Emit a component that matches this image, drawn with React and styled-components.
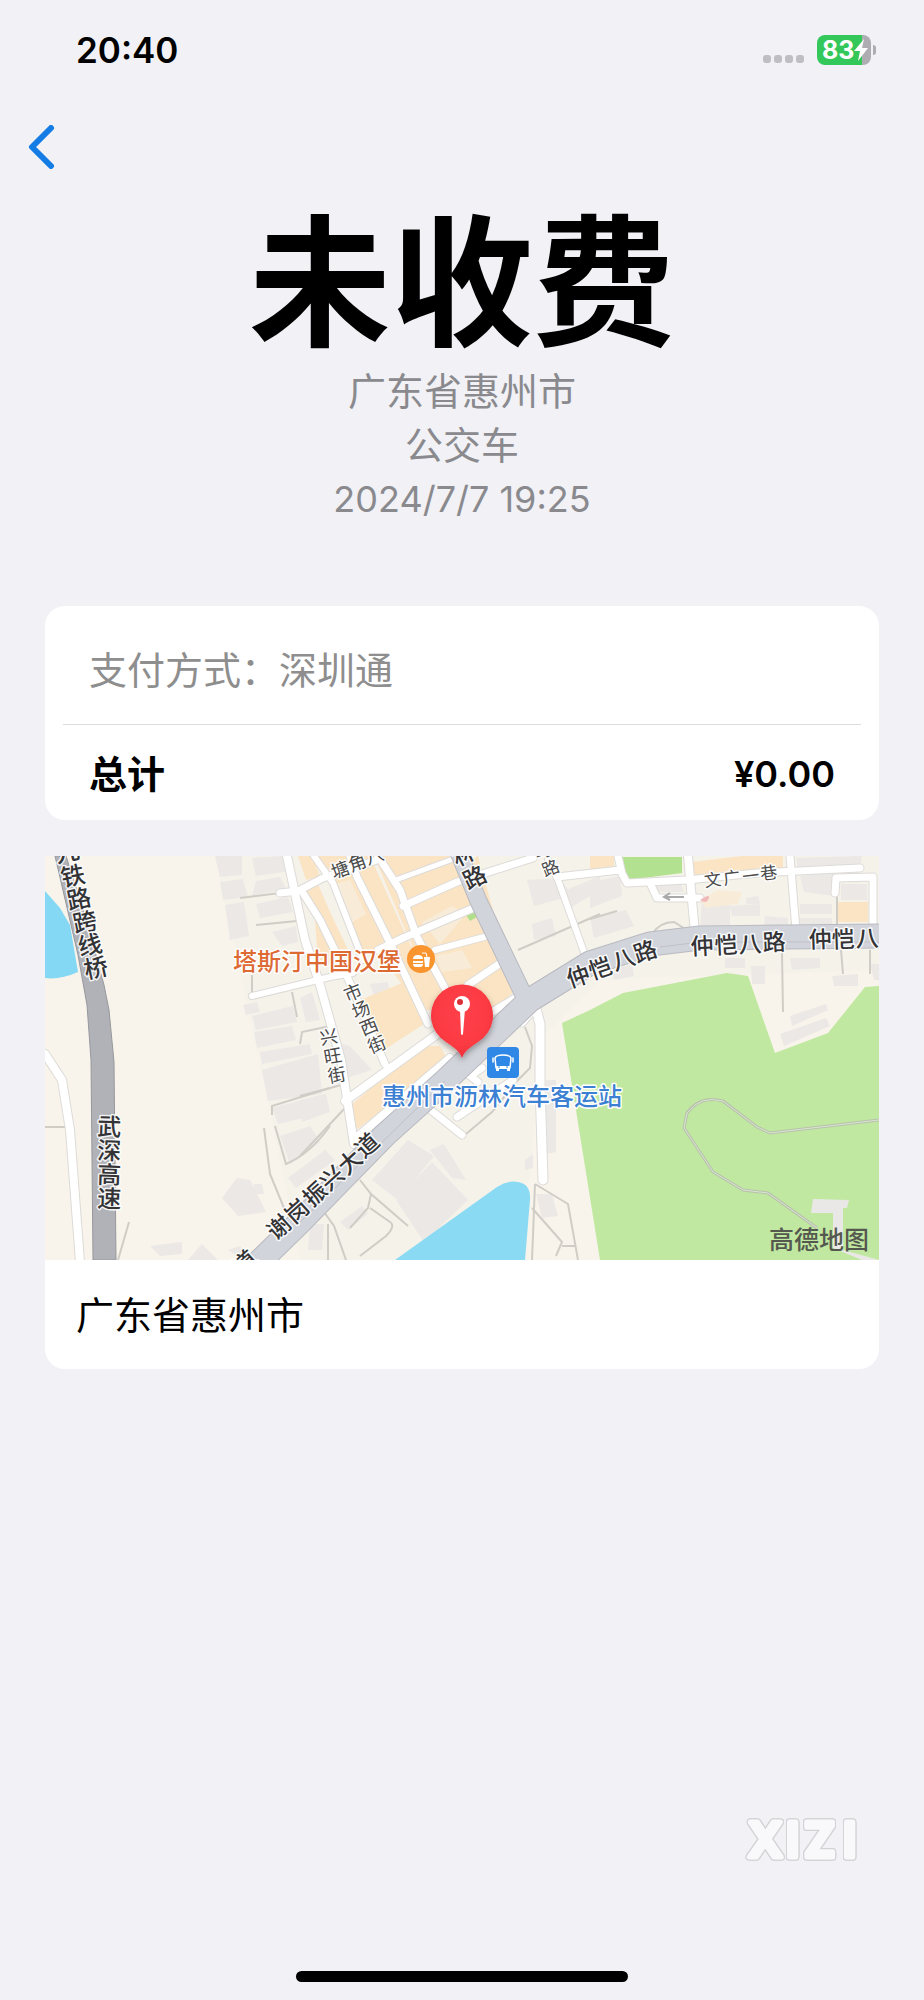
import React from "react";
import styled, { createGlobalStyle } from "styled-components";

const GlobalStyle = createGlobalStyle`
  * { box-sizing: border-box; }
  body {
    margin: 0;
    background: #f1f1f6;
    color: #000;
    font-family: Inter, "Noto Sans CJK SC", sans-serif;
  }
`;

const Screen = styled.div`
  min-height: 100vh;
  display: flex;
  flex-direction: column;
`;

const StatusBar = styled.header`
  height: 100px;
  padding: 0 48px 0 76px;
  display: flex;
  align-items: center;
  justify-content: space-between;
`;

const Clock = styled.time`
  font-size: 35px;
  line-height: 44px;
  font-weight: 600;
`;

const StatusIcons = styled.div`
  display: flex;
  align-items: center;
  gap: 13px;
`;

const SignalDots = styled.div`
  display: flex;
  gap: 3px;
  padding-top: 18px;
`;

const Dot = styled.span`
  width: 8px;
  height: 8px;
  border-radius: 3px;
  background: #bebec3;
`;

const Battery = styled.div`
  display: flex;
  align-items: center;
  gap: 2px;
`;

const BatteryBody = styled.div`
  width: 54px;
  height: 30px;
  padding-left: 5px;
  border-radius: 8px;
  display: flex;
  align-items: center;
  background: linear-gradient(to right, #34c759 83%, #adadb2 83%);
  color: #fff;
  font-size: 25px;
  line-height: 30px;
  font-weight: 700;
`;

const BatteryTip = styled.span`
  width: 3px;
  height: 10px;
  border-radius: 0 3px 3px 0;
  background: #adadb2;
`;

const NavBar = styled.nav`
  height: 94px;
  padding: 0 20px;
  display: flex;
  align-items: center;
`;

const BackButton = styled.button`
  width: 44px;
  height: 56px;
  padding: 0;
  border: 0;
  background: none;
  display: flex;
  align-items: center;
  justify-content: center;
  cursor: pointer;
`;

const Summary = styled.section`
  padding-top: 8px;
  text-align: center;
`;

const Title = styled.h1`
  margin: 0;
  font-size: 142px;
  line-height: 162px;
  font-weight: 600;
`;

const Detail = styled.p`
  margin: 0;
  font-size: ${(p) => (p.$numeric ? "36px" : "38px")};
  line-height: 54px;
  color: #8a8a8e;
`;

const Cards = styled.main`
  padding: 80px 45px 0;
  display: flex;
  flex-direction: column;
  gap: 36px;
`;

const Card = styled.section`
  border-radius: ${(p) => (p.$flatTop ? "0 0 20px 20px" : "20px")};
  overflow: hidden;
  background: #fff;
`;

const Row = styled.div`
  display: flex;
  justify-content: space-between;
  padding: ${(p) => (p.$total ? "23px 44px 20px" : "38px 44px 28px")};
  font-size: 38px;
  line-height: 52px;
  font-weight: ${(p) => (p.$total ? 600 : 400)};
  color: ${(p) => (p.$total ? "#000" : "#8e8e8e")};
`;

const Amount = styled.span`
  font-size: 36px;
`;

const Divider = styled.hr`
  height: 1px;
  margin: 0 18px;
  border: 0;
  background: #dcdcde;
`;

const MapSvg = styled.svg`
  display: block;
  width: 100%;
  height: auto;
  font-family: "Noto Sans CJK SC", sans-serif;
`;

const Address = styled.p`
  margin: 0;
  padding: 29px 31px 28px;
  font-size: 38px;
  line-height: 52px;
`;

const Footer = styled.footer`
  margin-top: auto;
  padding-bottom: 18px;
  display: flex;
  flex-direction: column;
  align-items: center;
  gap: 106px;
`;

const Watermark = styled.svg`
  align-self: flex-end;
  margin-right: 60px;
  overflow: visible;
  font-family: Inter, sans-serif;
  filter: drop-shadow(1px 0 0 #d3d3d7) drop-shadow(-1px 0 0 #d3d3d7)
    drop-shadow(0 1px 0 #d3d3d7) drop-shadow(0 -1px 0 #d3d3d7);
`;

const HomeIndicator = styled.div`
  width: 36%;
  height: 11px;
  border-radius: 6px;
  background: #000;
`;

const buildings = [
  "215,856 242,856 242,875 220,877", "252,858 282,856 285,872 256,876",
  "220,882 243,879 248,897 223,900", "256,881 280,877 286,889 252,896",
  "225,905 244,902 249,936 230,940", "256,904 288,897 293,912 260,918",
  "272,932 296,926 298,942 282,946", "243,1005 257,1002 260,1012 246,1015",
  "252,1016 293,1006 297,1022 256,1030", "254,1032 292,1026 296,1040 257,1048",
  "260,1052 310,1044 312,1054 262,1064", "262,1070 318,1054 322,1094 268,1101",
  "300,998 312,992 320,1020 306,1022", "272,1108 325,1094 328,1112 278,1124",
  "280,1136 310,1126 320,1142 290,1164", "288,1178 325,1150 335,1160 296,1188",
  "222,1198 237,1178 250,1180 266,1212 238,1216", "254,1184 262,1184 264,1194 254,1194",
  "150,1246 182,1242 182,1254 160,1256", "188,1260 202,1244 218,1260",
  "310,1224 324,1224 322,1250 308,1250", "228,1250 240,1246 250,1256 242,1260",
  "372,1180 408,1140 434,1156 398,1200", "396,1200 432,1162 468,1200 424,1242",
  "430,1150 444,1144 466,1180 452,1178", "340,1222 362,1206 368,1214 348,1230",
  "525,1160 533,1154 533,1168 525,1170", "300,1100 326,1094 330,1112 302,1122",
  "330,1040 350,1046 372,1070 340,1080", "370,984 388,982 392,1010 376,1002",
  "546,1080 556,1080 556,1152 546,1154", "536,1194 552,1194 558,1216 542,1218",
  "527,880 560,878 572,896 534,906", "532,924 552,918 556,936 534,940",
  "566,890 600,876 600,890 570,908", "590,882 620,876 622,896 590,908",
  "590,918 626,910 634,926 594,938", "656,884 680,882 684,892 658,892",
  "702,898 730,892 730,928 700,932", "730,906 760,904 760,916 732,916",
  "746,898 758,896 760,904 746,904", "765,916 788,918 788,926 764,926",
  "796,858 862,856 860,866 798,868", "800,876 834,872 834,896 804,892",
  "800,904 832,904 832,914 800,914", "798,918 832,918 832,926 798,926",
  "841,884 867,884 867,900 841,900", "725,958 745,958 745,968 725,968",
  "751,966 765,966 765,984 752,984", "790,958 820,958 820,968 792,970",
  "832,976 858,974 858,986 834,986", "870,964 879,964 879,980 874,980",
  "790,1016 826,1004 828,1010 792,1026", "780,1034 826,1018 830,1026 784,1046",
  "590,968 602,966 604,974 590,976", "612,970 632,964 634,976 614,980",
];

const blocks = [
  "298,856 312,856 320,876 306,880", "303,892 318,884 330,912 352,958 340,966 314,916",
  "315,920 334,948 344,968 318,962", "312,856 370,856 440,1010 420,1010 326,878",
  "332,886 355,878 387,946 362,954", "374,856 478,856 515,990 486,1020 440,1012",
  "360,1000 410,980 424,1024 384,1050 366,1018", "350,1106 420,1046 440,1046 448,1060 356,1130",
  "590,856 614,856 614,866 590,870", "692,862 742,856 783,856 783,870 695,880",
  "838,902 868,902 868,922 838,922",
];

const pale = [
  "422,922 452,906 466,914 440,944", "436,956 462,950 472,968 442,972",
  "335,884 350,880 366,914 352,922", "700,900 718,890 742,892 738,904 706,908",
];

const streets = [
  { d: "M287 856L305 940L320 985L341 1060L354 1144", w: 8 },
  { d: "M303 893L320 920L343 967L385 1064", w: 7 },
  { d: "M314 856L333 883L363 960", w: 6 },
  { d: "M350 856L357 877L390 943L428 1024", w: 7 },
  { d: "M378 856L400 890L417 937L446 990", w: 7 },
  { d: "M280 893L298 891L323 878L377 860", w: 7 },
  { d: "M378 950L403 938L476 907", w: 7 },
  { d: "M403 906L457 882L533 858", w: 7 },
  { d: "M393 881L456 858", w: 5 },
  { d: "M435 950L488 936", w: 6 },
  { d: "M468 985L502 962", w: 7 },
  { d: "M492 1012L520 995", w: 7 },
  { d: "M345 1101L443 1030", w: 8 },
  { d: "M356 1138L450 1058", w: 8 },
  { d: "M252 996L330 977L353 973", w: 6 },
  { d: "M535 1005L540 1024L540 1083L543 1180", w: 9 },
  { d: "M522 1023L535 1008", w: 7 },
  { d: "M427 1107L462 1135", w: 7 },
  { d: "M457 1117L513 1080", w: 7 },
  { d: "M463 1070L478 1082M470 1076L482 1068", w: 7 },
  { d: "M548 860L557 877L585 955", w: 6 },
  { d: "M557 877L620 870L627 883L687 880L757 873L860 868", w: 7 },
  { d: "M618 856L622 874", w: 7 },
  { d: "M650 883L657 898L700 898", w: 7 },
  { d: "M688 856L695 933", w: 8 },
  { d: "M790 856L796 930", w: 7 },
  { d: "M835 893L836 878L873 877L873 924", w: 7 },
  { d: "M45 1054L62 1080L70 1130L80 1262", w: 8 },
];

const lanes = [
  "M45 1127H65", "M118 1260L129 1222", "M240 898L280 893", "M256 925L297 921",
  "M252 975V996", "M292 992L297 1017", "M300 1044L302 1032L330 1026",
  "M272 1115V1106L330 1088", "M275 1126L286 1164Q310 1154 330 1126",
  "M264 1128L270 1174L284 1208", "M300 1096L345 1084M345 1108L300 1156",
  "M360 1180L371 1194L408 1226M371 1194L368 1208L350 1228M370 1208L390 1222Q396 1226 386 1236L360 1256",
  "M324 1212L334 1226L346 1260M328 1224V1260",
  "M535 1184L568 1204L578 1260M535 1184L532 1260M532 1208L562 1242L556 1256M562 1246H576",
  "M518 950L600 914", "M525 1027L532 1046L530 1068L516 1082M505 1096L492 1112L466 1134",
  "M652 934Q660 922 674 922L690 932", "M590 919L617 911", "M782 952L783 1012",
  "M841 950L843 974M870 950V974", "M837 894V924",
];

const mapLabels = [
  { text: "九铁路跨线桥", from: [67, 852], to: [96, 968], angle: -12, size: 24 },
  { text: "武深高速", from: [109, 1126], to: [109, 1198], angle: 2, size: 24 },
  { text: "谢岗振兴大道", from: [279, 1227], to: [367, 1145], angle: -42, size: 23 },
  { text: "道", from: [245, 1262], to: [245, 1262], angle: -42, size: 23 },
  { text: "林路", from: [464, 854], to: [475, 877], angle: -26, size: 23 },
  { text: "仲恺八路", from: [578, 976], to: [645, 951], angle: -19, size: 23 },
  { text: "仲恺八路", from: [702, 946], to: [774, 942], angle: -3, size: 23 },
  { text: "仲恺八", from: [820, 939], to: [867, 938], angle: -2, size: 23 },
  { text: "塘角八", from: [340, 869], to: [374, 855], angle: -20, size: 18, light: true },
  { text: "马路", from: [542, 851], to: [550, 868], angle: -22, size: 17, light: true },
  { text: "文广一巷", from: [713, 880], to: [769, 873], angle: -7, size: 17, light: true },
  { text: "市场西街", from: [353, 992], to: [377, 1044], angle: -22, size: 18, light: true },
  { text: "兴旺街", from: [329, 1037], to: [337, 1075], angle: -10, size: 18, light: true },
];

// Spreads the characters evenly between two centre points, all at one angle.
function MapLabel({ text, from, to, angle, size, light }) {
  const rad = (angle * Math.PI) / 180;
  const dx = 0.5 * size;
  const dy = -0.38 * size;
  const ox = dx * Math.cos(rad) - dy * Math.sin(rad);
  const oy = dx * Math.sin(rad) + dy * Math.cos(rad);
  const chars = [...text];
  const at = (axis, offset) =>
    chars
      .map((_, i) => {
        const t = chars.length > 1 ? i / (chars.length - 1) : 0;
        return Math.round(from[axis] + (to[axis] - from[axis]) * t - offset);
      })
      .join(" ");
  return (
    <text
      x={at(0, ox)}
      y={at(1, oy)}
      rotate={angle}
      fontSize={size}
      fontWeight={light ? 400 : 500}
      fill={light ? "#4a4a4a" : "#333336"}
      stroke="#fff"
      strokeOpacity="0.85"
      strokeWidth="3"
      strokeLinejoin="round"
      paintOrder="stroke"
    >
      {text}
    </text>
  );
}

function CityMap() {
  return (
    <MapSvg viewBox="45 856 834 404" role="img" aria-label="惠州市沥林汽车客运站">
      <defs>
        <radialGradient id="pin" cx="50%" cy="40%" r="62%">
          <stop offset="0" stopColor="#ff4049" />
          <stop offset="0.7" stopColor="#fb3a43" />
          <stop offset="1" stopColor="#ea3039" />
        </radialGradient>
        <filter id="shade" x="-30%" y="-30%" width="160%" height="160%">
          <feDropShadow dx="0" dy="3" stdDeviation="3" floodOpacity="0.35" />
        </filter>
      </defs>
      <rect x="45" y="856" width="834" height="404" fill="#f8f4eb" />
      <path d="M215 856H879V970L600 980L540 1040L530 1180L420 1260H300L270 1110Z" fill="#f5f2ea" />
      <path d="M45 891L60 908L70 925L78 972Q60 980 45 978Z" fill="#84d8f4" />
      {buildings.map((points) => (
        <polygon key={points} points={points} fill="#ebe8e6" />
      ))}
      {blocks.map((points) => (
        <polygon key={points} points={points} fill="#fbe4c4" />
      ))}
      {pale.map((points) => (
        <polygon key={points} points={points} fill="#f8ecd9" />
      ))}
      <path d="M466 915L474 911L477 917L470 921Z" fill="#b0e08c" />
      <g fill="none" stroke="#d0cdc7" strokeWidth="2">
        {lanes.map((d) => (
          <path key={d} d={d} />
        ))}
      </g>
      <path
        d="M562 1023L590 1010L623 993L727 973L748 976L775 1053L828 1033L865 987L879 986V1260H600Z"
        fill="#c0e8a0"
      />
      <path d="M622 857H682V873L628 880Z" fill="#b2e290" />
      <path
        d="M395 1260L497 1187Q508 1180 518 1182Q531 1184 530 1200L525 1260Z"
        fill="#8adaf3"
      />
      <g fill="none" stroke="#dddbd8" strokeLinecap="round" strokeLinejoin="round">
        {streets.map(({ d, w }) => (
          <path key={d} d={d} strokeWidth={w + 2} />
        ))}
      </g>
      <g fill="none" stroke="#fff" strokeLinecap="round" strokeLinejoin="round">
        {streets.map(({ d, w }) => (
          <path key={d} d={d} strokeWidth={w} />
        ))}
      </g>
      <g fill="none" strokeLinejoin="round">
        <g stroke="#b9bac1">
          <path d="M456 846L478 900L526 1000" strokeWidth="18" />
          <path d="M253 1268L300 1222L385 1135L445 1081L530 1000L590 963L650 944L700 938L885 936" strokeWidth="25" />
        </g>
        <g stroke="#d2d4db">
          <path d="M456 846L478 900L526 1000" strokeWidth="16" />
          <path d="M253 1268L300 1222L385 1135L445 1081L530 1000L590 963L650 944L700 938L885 936" strokeWidth="23" />
        </g>
        <path d="M660 947L700 942H885M300 1222L445 1081" stroke="#c0c1c7" />
      </g>
      <path
        d="M55 856H66L88 925L104 985L109 1010L114 1062L116 1260H93L91 1060L87 1005L78 955Z"
        fill="#b1b2b7"
        stroke="#97989d"
      />
      <g fill="none">
        <path
          d="M879 1120L770 1133L757 1127L723 1101Q700 1095 687 1113L684 1128L713 1172L743 1190L768 1193L817 1228"
          stroke="#b8c0ae"
          strokeWidth="3"
        />
        <path
          d="M879 1120L770 1133L757 1127L723 1101Q700 1095 687 1113L684 1128L713 1172L743 1190L768 1193L817 1228"
          stroke="#d9e6cf"
        />
        <path d="M664 897H684M670 893L664 897L670 900" stroke="#a9a9a9" strokeWidth="2" />
      </g>
      <path d="M813 1199L849 1200L847 1208H843V1250L879 1260H862L833 1248V1213L811 1213Z" fill="#e9e8e6" />
      <path d="M700 900Q712 892 708 900Q706 904 700 900Z" fill="#f0b9b9" />

      {mapLabels.map((label) => (
        <MapLabel key={label.text + label.from} {...label} />
      ))}

      <g stroke="#fff" strokeWidth="3" strokeLinejoin="round" paintOrder="stroke" fontSize="24" fontWeight="500">
        <text x="233" y="970" fill="#dd6a33">塔斯汀中国汉堡</text>
        <text x="382" y="1105" fill="#3b80d2">惠州市沥林汽车客运站</text>
      </g>
      <text x="769" y="1249" fontSize="25" fontWeight="500" fill="#55584f">高德地图</text>

      <g>
        <circle cx="421" cy="959" r="14" fill="#f9942f" />
        <path d="M413 959Q413 955 418 955Q423 955 423 959ZM413 961H423V963H413ZM413 964H423Q423 967 420 967H416Q413 967 413 964Z" fill="#fff" />
        <path d="M424 957H430L429 967H425Z" fill="#fff" />
        <path d="M427 957L426 953H422" fill="none" stroke="#fff" />
      </g>

      <g>
        <rect x="487" y="1047" width="32" height="31" rx="4" fill="#2f87e6" />
        <g fill="none" stroke="#fff" strokeWidth="2" strokeLinejoin="round" strokeLinecap="round">
          <path d="M496 1068L495 1058Q496 1055 503 1055Q510 1055 511 1058L510 1068Z" strokeWidth="1.5" />
          <path d="M493 1058V1062M513 1058V1062" strokeWidth="1.5" />
        </g>
        <path d="M496 1066H510V1071H507V1069H499V1071H496Z" fill="#fff" />
        <path d="M498 1067H500M506 1067H508" stroke="#2f87e6" />
      </g>

      <g filter="url(#shade)">
        <path
          d="M462 1058C459 1050 453 1047 446 1042A31 31 0 1 1 478 1042C471 1047 465 1050 462 1058Z"
          fill="url(#pin)"
        />
      </g>
      <path d="M460 1009H465L463 1034Q462 1036 461 1034Z" fill="#fff" />
      <circle cx="462" cy="1004" r="8" fill="#fff" />
      <circle cx="460" cy="1002" r="3" fill="#d92f38" />
    </MapSvg>
  );
}

export default function App() {
  return (
    <Screen>
      <GlobalStyle />
      <StatusBar>
        <Clock>20:40</Clock>
        <StatusIcons>
          <SignalDots>
            <Dot />
            <Dot />
            <Dot />
            <Dot />
          </SignalDots>
          <Battery>
            <BatteryBody>
              83
              <svg width="14" height="22" viewBox="0 0 14 22" aria-hidden="true">
                <path d="M10 0L0 12H6L4 22L14 9H8Z" fill="#fff" />
              </svg>
            </BatteryBody>
            <BatteryTip />
          </Battery>
        </StatusIcons>
      </StatusBar>
      <NavBar>
        <BackButton type="button" aria-label="返回">
          <svg width="28" height="44" viewBox="0 0 28 44" aria-hidden="true">
            <path
              d="M23 3L4 22L23 41"
              fill="none"
              stroke="#147ce5"
              strokeWidth="6"
              strokeLinecap="round"
              strokeLinejoin="round"
            />
          </svg>
        </BackButton>
      </NavBar>
      <Summary>
        <Title>未收费</Title>
        <Detail>广东省惠州市</Detail>
        <Detail>公交车</Detail>
        <Detail $numeric>2024/7/7 19:25</Detail>
      </Summary>
      <Cards>
        <Card>
          <Row>
            <span>支付方式：深圳通</span>
          </Row>
          <Divider />
          <Row $total>
            <span>总计</span>
            <Amount>¥0.00</Amount>
          </Row>
        </Card>
        <Card $flatTop>
          <CityMap />
          <Address>广东省惠州市</Address>
        </Card>
      </Cards>
      <Footer>
        <Watermark width="118" height="52" viewBox="0 0 118 52">
          <text
            x="2 40 58 97"
            y="44"
            fontSize="48"
            fontWeight="600"
            fill="#f9f9fb"
            stroke="#f9f9fb"
            strokeWidth="5"
            strokeLinejoin="round"
          >
            XIZI
          </text>
        </Watermark>
        <HomeIndicator />
      </Footer>
    </Screen>
  );
}
